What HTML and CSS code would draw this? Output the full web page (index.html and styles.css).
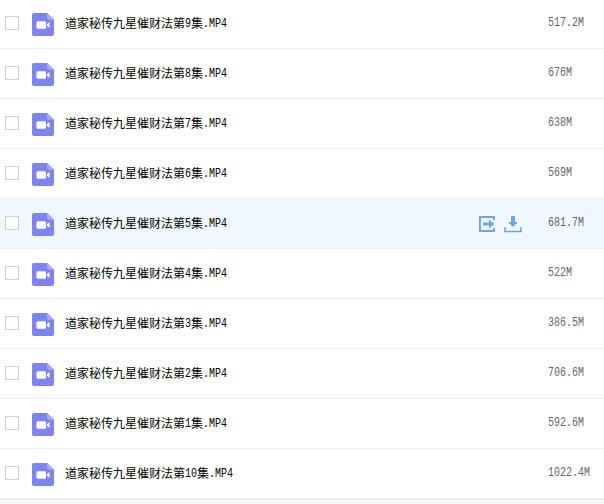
FILE: index.html
```html
<!DOCTYPE html>
<html lang="zh-CN">
<head>
    <meta charset="UTF-8">
    <meta name="viewport" content="width=device-width, initial-scale=1.0">
    <title>文件列表</title>
    <link rel="stylesheet" href="styles.css">
</head>
<body>
    <svg width="0" height="0" class="defs">
        <symbol id="video" viewBox="0 0 22 24" preserveAspectRatio="none">
            <path d="M2 0H15L22 7V22A2 2 0 0 1 20 24H2A2 2 0 0 1 0 22V2A2 2 0 0 1 2 0Z" fill="#7e83f2"/>
            <path d="M15 0L22 7H17A2 2 0 0 1 15 5Z" fill="#a5a8f7"/>
            <rect x="4.5" y="8.5" width="9.5" height="8" rx="1.5" fill="#fff"/>
            <path d="M15 11.5L17.5 9.5V15.5L15 13.5Z" fill="#fff"/>
        </symbol>
    </svg>
    <div class="list">
        <div class="row">
            <span class="check"></span>
            <svg class="file-icon"><use href="#video"/></svg>
            <div class="name">道家秘传九星催财法第<span class="mono">9</span>集<span class="mono">.MP4</span></div>
            <div class="size"><span class="mono">517.2M</span></div>
        </div>
        <div class="row">
            <span class="check"></span>
            <svg class="file-icon"><use href="#video"/></svg>
            <div class="name">道家秘传九星催财法第<span class="mono">8</span>集<span class="mono">.MP4</span></div>
            <div class="size"><span class="mono">676M</span></div>
        </div>
        <div class="row">
            <span class="check"></span>
            <svg class="file-icon"><use href="#video"/></svg>
            <div class="name">道家秘传九星催财法第<span class="mono">7</span>集<span class="mono">.MP4</span></div>
            <div class="size"><span class="mono">638M</span></div>
        </div>
        <div class="row">
            <span class="check"></span>
            <svg class="file-icon"><use href="#video"/></svg>
            <div class="name">道家秘传九星催财法第<span class="mono">6</span>集<span class="mono">.MP4</span></div>
            <div class="size"><span class="mono">569M</span></div>
        </div>
        <div class="row active">
            <span class="check"></span>
            <svg class="file-icon"><use href="#video"/></svg>
            <div class="name">道家秘传九星催财法第<span class="mono">5</span>集<span class="mono">.MP4</span></div>
            <div class="actions">
                <svg class="action" viewBox="0 0 18 18">
                    <path d="M16 5V2H2V16H16V13" fill="none" stroke="#6ba7e8" stroke-width="2"/>
                    <path d="M5 7.5H11V4.5L16.5 9L11 13.5V10.5H5Z" fill="#6ba7e8"/>
                </svg>
                <svg class="action" viewBox="0 0 18 18">
                    <path d="M7 1H11V7H14L9 12L4 7H7Z" fill="#6ba7e8"/>
                    <path d="M1 12V16.5H17V12" fill="none" stroke="#6ba7e8" stroke-width="1.6"/>
                </svg>
            </div>
            <div class="size"><span class="mono">681.7M</span></div>
        </div>
        <div class="row">
            <span class="check"></span>
            <svg class="file-icon"><use href="#video"/></svg>
            <div class="name">道家秘传九星催财法第<span class="mono">4</span>集<span class="mono">.MP4</span></div>
            <div class="size"><span class="mono">522M</span></div>
        </div>
        <div class="row">
            <span class="check"></span>
            <svg class="file-icon"><use href="#video"/></svg>
            <div class="name">道家秘传九星催财法第<span class="mono">3</span>集<span class="mono">.MP4</span></div>
            <div class="size"><span class="mono">386.5M</span></div>
        </div>
        <div class="row">
            <span class="check"></span>
            <svg class="file-icon"><use href="#video"/></svg>
            <div class="name">道家秘传九星催财法第<span class="mono">2</span>集<span class="mono">.MP4</span></div>
            <div class="size"><span class="mono">706.6M</span></div>
        </div>
        <div class="row">
            <span class="check"></span>
            <svg class="file-icon"><use href="#video"/></svg>
            <div class="name">道家秘传九星催财法第<span class="mono">1</span>集<span class="mono">.MP4</span></div>
            <div class="size"><span class="mono">592.6M</span></div>
        </div>
        <div class="row">
            <span class="check"></span>
            <svg class="file-icon"><use href="#video"/></svg>
            <div class="name">道家秘传九星催财法第<span class="mono">10</span>集<span class="mono">.MP4</span></div>
            <div class="size"><span class="mono">1022.4M</span></div>
        </div>
    </div>
    <div class="footer"></div>
</body>
</html>
```

FILE: styles.css
```css
html, body { margin: 0; padding: 0; height: 504px; overflow: hidden; background: #fff; }
body { font-family: "Noto Sans CJK SC", "Liberation Mono", monospace; font-size: 12px; color: #000; }
.defs { display: block; height: 0; }
.list { margin-top: -1px; }
.row { display: flex; align-items: center; height: 48px; padding-bottom: 1px; border-bottom: 1px solid #f0f0f0; }
.active { background: #f0f7fe; }
.check { width: 12px; height: 12px; margin-left: 5px; border: 1px solid #cfcfcf; background: #fff; flex: none; }
.file-icon { width: 22px; height: 23px; margin-left: 13px; margin-top: 3px; flex: none; }
.name { display: flex; align-items: center; margin-left: 11px; flex: 1; height: 14px; line-height: 14px; white-space: nowrap; }
/* latin is narrow and tall in the original font */
.mono { display: block; font-family: "Liberation Mono", monospace; font-size: 10px; line-height: 12px; transform: scaleY(1.2); }
.name .mono { margin-top: 4px; }
.actions { display: flex; align-items: center; gap: 8px; margin-right: 26px; margin-left: 1px; margin-top: 2px; }
.action { width: 18px; height: 18px; display: block; }
.size { width: 56px; flex: none; padding-top: 2px; color: #666; }
.footer { height: 5px; background: #f5f6f8; border-top: 1px solid #e6e8ec; }
```
